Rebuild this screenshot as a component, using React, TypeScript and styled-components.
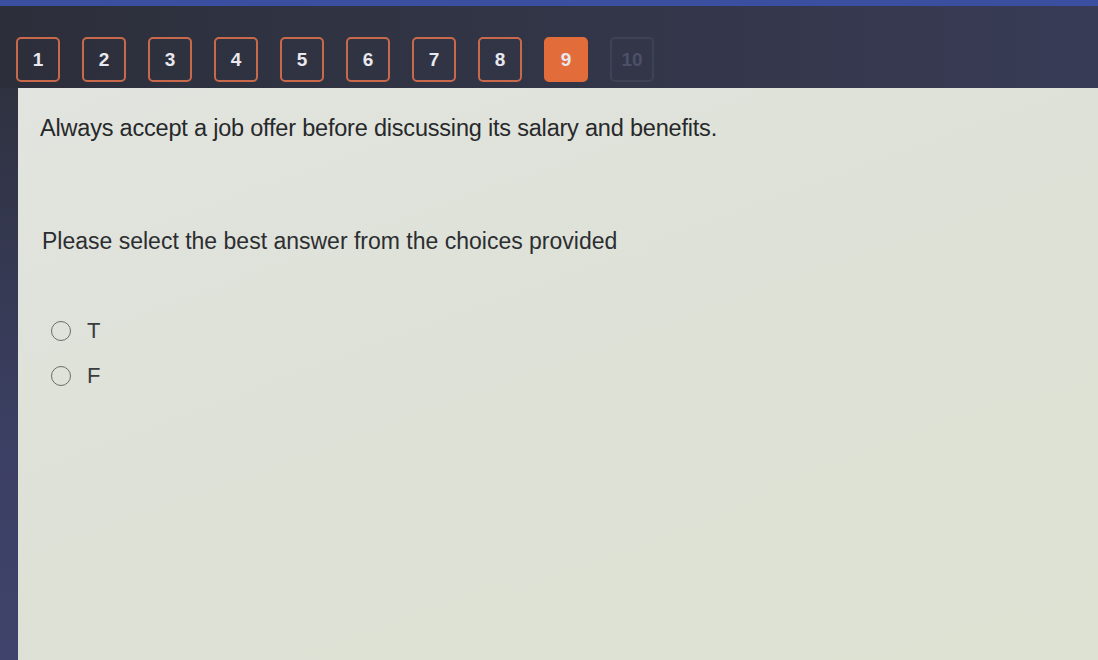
import React from 'react';
import styled, { createGlobalStyle } from 'styled-components';

const GlobalStyle = createGlobalStyle`
  html, body {
    margin: 0;
    padding: 0;
    background: #353a55;
  }
  body {
    font-family: 'Liberation Sans', Arial, sans-serif;
  }
`;

const Page = styled.div`
  width: 1098px;
  height: 660px;
  display: flex;
  flex-direction: column;
  overflow: hidden;
  background: #363a58;
`;

const TopStrip = styled.div`
  height: 6px;
  background: #3a4fa0;
`;

const Toolbar = styled.div`
  height: 82px;
  background: linear-gradient(90deg, #2c2f3a 0%, #333648 55%, #383b55 100%);
  display: flex;
  align-items: flex-start;
  gap: 22px;
  padding: 31px 0 0 16px;
  box-sizing: border-box;
`;

type QState = 'done' | 'current' | 'locked';

const QButton = styled.div<{ $state: QState }>`
  width: 44px;
  height: 45px;
  box-sizing: border-box;
  border-radius: 5px;
  display: flex;
  align-items: center;
  justify-content: center;
  font-size: 19px;
  font-weight: bold;
  color: ${p => (p.$state === 'locked' ? '#4d5066' : '#e8e8ee')};
  background: ${p => (p.$state === 'current' ? '#e26d3a' : 'transparent')};
  border: 2px solid
    ${p =>
      p.$state === 'current'
        ? '#e26d3a'
        : p.$state === 'locked'
        ? '#3f4254'
        : '#c8694c'};
`;

const Body = styled.div`
  flex: 1;
  display: flex;
`;

const LeftRail = styled.div`
  width: 18px;
  background: linear-gradient(180deg, #2f3240 0%, #3b3f62 60%, #40436b 100%);
`;

const Content = styled.div`
  flex: 1;
  background: linear-gradient(160deg, #e2e4df 0%, #dde1d6 50%, #dde2d3 100%);
  padding: 26px 0 0 22px;
  color: #27292b;
`;

const Question = styled.p`
  margin: 0;
  font-size: 23.5px;
  line-height: 28px;
  letter-spacing: -0.2px;
`;

const Prompt = styled.p`
  margin: 85px 0 0 2px;
  font-size: 23px;
  line-height: 28px;
  color: #2c2e31;
`;

const Choices = styled.div`
  margin: 64px 0 0 11px;
  display: flex;
  flex-direction: column;
  gap: 21px;
`;

const Choice = styled.label`
  display: flex;
  align-items: center;
  gap: 16px;
  font-size: 22px;
  line-height: 24px;
  color: #3a3c3e;
`;

const Radio = styled.span`
  width: 20px;
  height: 20px;
  border-radius: 50%;
  border: 1.5px solid #6a6d6c;
  box-sizing: border-box;
`;

const App: React.FC = () => {
  const buttons = Array.from({ length: 10 }, (_, i) => i + 1);
  return (
    <Page>
      <GlobalStyle />
      <TopStrip />
      <Toolbar>
        {buttons.map(n => (
          <QButton
            key={n}
            $state={n === 9 ? 'current' : n === 10 ? 'locked' : 'done'}
          >
            {n}
          </QButton>
        ))}
      </Toolbar>
      <Body>
        <LeftRail />
        <Content>
          <Question>
            Always accept a job offer before discussing its salary and benefits.
          </Question>
          <Prompt>Please select the best answer from the choices provided</Prompt>
          <Choices>
            <Choice>
              <Radio />T
            </Choice>
            <Choice>
              <Radio />F
            </Choice>
          </Choices>
        </Content>
      </Body>
    </Page>
  );
};

export default App;
